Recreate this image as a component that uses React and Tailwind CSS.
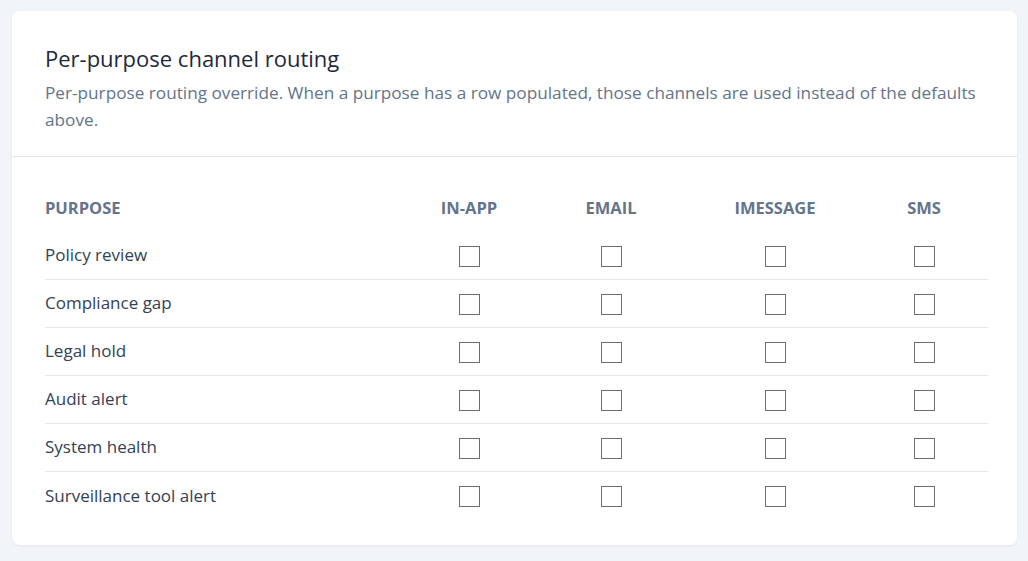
import React, { useState } from 'react';

const purposes = [
    'Policy review',
    'Compliance gap',
    'Legal hold',
    'Audit alert',
    'System health',
    'Surveillance tool alert',
];

const channels = [
    { key: 'inapp', label: 'In-app', width: 'w-[126px]' },
    { key: 'email', label: 'Email', width: 'w-[158px]' },
    { key: 'imessage', label: 'iMessage', width: 'w-[170px]' },
    { key: 'sms', label: 'SMS', width: 'w-[128px]' },
];

function App() {
    const [routing, setRouting] = useState({});

    const toggle = (purpose, channel) => {
        const k = purpose + ':' + channel;
        setRouting((prev) => ({ ...prev, [k]: !prev[k] }));
    };

    return (
        <div className="min-h-screen bg-[#f1f4f8] px-3 pt-[11px] pb-4 font-['Open_Sans',sans-serif]">
            <section className="bg-white rounded-lg shadow-[0_1px_3px_rgba(15,23,42,0.06)] w-[1005px]">
                <div className="px-[33px] pt-[33px] pb-[23px] border-b border-[#e5e7eb]">
                    <h2 className="text-[22px] leading-[28px] text-[#1e293b]">Per-purpose channel routing</h2>
                    <p className="mt-[7px] text-[17.2px] leading-[27px] text-[#64748b]">
                        Per-purpose routing override. When a purpose has a row populated, those channels are used instead of the defaults above.
                    </p>
                </div>
                <div className="px-[33px] pt-[30px] pb-[26px]">
                    <table className="w-[943px] border-collapse">
                        <thead>
                            <tr className="h-[44px]">
                                <th className="w-[361px] text-left text-[16.5px] font-bold uppercase text-[#64748b] pb-[2px]">Purpose</th>
                                {channels.map((c) => (
                                    <th key={c.key} className={`${c.width} text-center text-[16.5px] font-bold uppercase text-[#64748b] pb-[2px]`}>
                                        {c.label}
                                    </th>
                                ))}
                            </tr>
                        </thead>
                        <tbody>
                            {purposes.map((p, i) => (
                                <tr key={p} className={`h-[48px] ${i < purposes.length - 1 ? 'border-b border-[#e5e7eb]' : ''}`}>
                                    <td className="text-[17px] text-[#334155]">{p}</td>
                                    {channels.map((c) => (
                                        <td key={c.key} className="text-center">
                                            <input
                                                type="checkbox"
                                                checked={!!routing[p + ':' + c.key]}
                                                onChange={() => toggle(p, c.key)}
                                                className="appearance-none w-[21px] h-[21px] align-middle border-[1.5px] border-[#6e6e6e] rounded-none bg-white checked:bg-[#2563eb]"
                                            />
                                        </td>
                                    ))}
                                </tr>
                            ))}
                        </tbody>
                    </table>
                </div>
            </section>
        </div>
    );
}

export default App;
